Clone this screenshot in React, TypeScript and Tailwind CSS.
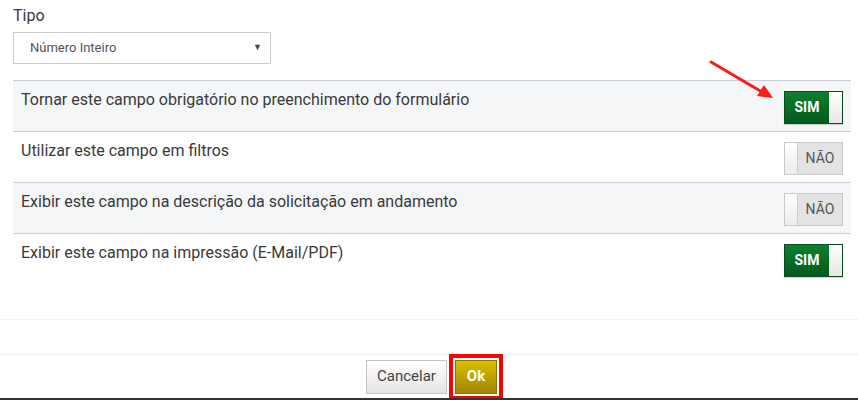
import React from "react";

const rows = [
  { label: "Tornar este campo obrigatório no preenchimento do formulário", on: true },
  { label: "Utilizar este campo em filtros", on: false },
  { label: "Exibir este campo na descrição da solicitação em andamento", on: false },
  { label: "Exibir este campo na impressão (E-Mail/PDF)", on: true },
];

function Toggle({ on }: { on: boolean }) {
  if (on) {
    return (
      <div className="flex h-[33px] w-[59px] border border-[#0b4a1f] shadow-[0_1px_1px_rgba(0,0,0,0.15)]">
        <div className="flex flex-1 items-center justify-center bg-gradient-to-b from-[#0c8030] to-[#045a1c] text-[14px] font-bold text-white">
          SIM
        </div>
        <div className="w-[13px] bg-gradient-to-b from-white to-[#e6e6e6]" />
      </div>
    );
  }
  return (
    <div className="flex h-[33px] w-[59px] border border-[#c9c9c9]">
      <div className="w-[13px] border-r border-[#cfcfcf] bg-gradient-to-b from-white to-[#ececec]" />
      <div className="flex flex-1 items-center justify-center bg-[#e3e3e3] text-[14px] text-[#555]">
        NÃO
      </div>
    </div>
  );
}

export default function App() {
  return (
    <div className="relative h-[400px] w-[858px] overflow-hidden bg-white font-['Roboto',sans-serif] text-[#3a3a3a]">
      <div className="px-[13px] pr-[7px]">
        <div className="pt-[6px] text-[16px] leading-[20px]">Tipo</div>
        <div className="mt-[6px] flex h-[32px] w-[258px] items-center justify-between border border-[#ccc] pl-[16px] pr-[8px] text-[13px] text-[#555]">
          <span>Número Inteiro</span>
          <span className="text-[9px] text-[#444]">▼</span>
        </div>

        <div className="mt-[16px]">
          {rows.map((r, i) => (
            <div
              key={i}
              className={`flex h-[51px] items-start justify-between border-t border-[#c9ced6] pl-[8px] pr-[8px] pt-[8px] ${
                i % 2 === 0 ? "bg-[#f5f6f8]" : "bg-white"
              }`}
            >
              <span className="text-[16px] leading-[22px] text-[#3a3a3a]">{r.label}</span>
              <div className="pt-[2px]">
                <Toggle on={r.on} />
              </div>
            </div>
          ))}
        </div>
      </div>

      <div className="mt-[35px] h-[35px] border-t border-[#f4f4f4]" />
      <div className="flex h-[44px] items-center justify-center gap-[2px] border-t border-[#ececec] pl-[11px]">
        <button className="h-[34px] w-[81px] border border-[#c4c4c4] bg-gradient-to-b from-white to-[#e4e4e4] text-[15px] text-[#444]">
          Cancelar
        </button>
        <div className="border-[4px] border-[#ff0000] p-[2px]">
          <button className="block h-[34px] w-[42px] border border-[#8a7500] bg-gradient-to-b from-[#dcc000] to-[#a08500] text-[15px] font-bold text-white">
            Ok
          </button>
        </div>
      </div>
      <div className="absolute bottom-0 left-0 h-[2px] w-full bg-[#333]" />

      <svg className="absolute left-0 top-0" width="858" height="400">
        <line x1="711" y1="62" x2="762" y2="92" stroke="#ff1a1a" strokeWidth="3" strokeLinecap="round" />
        <polygon points="773,98 757,96 764,85" fill="#ff1a1a" />
      </svg>
    </div>
  );
}
